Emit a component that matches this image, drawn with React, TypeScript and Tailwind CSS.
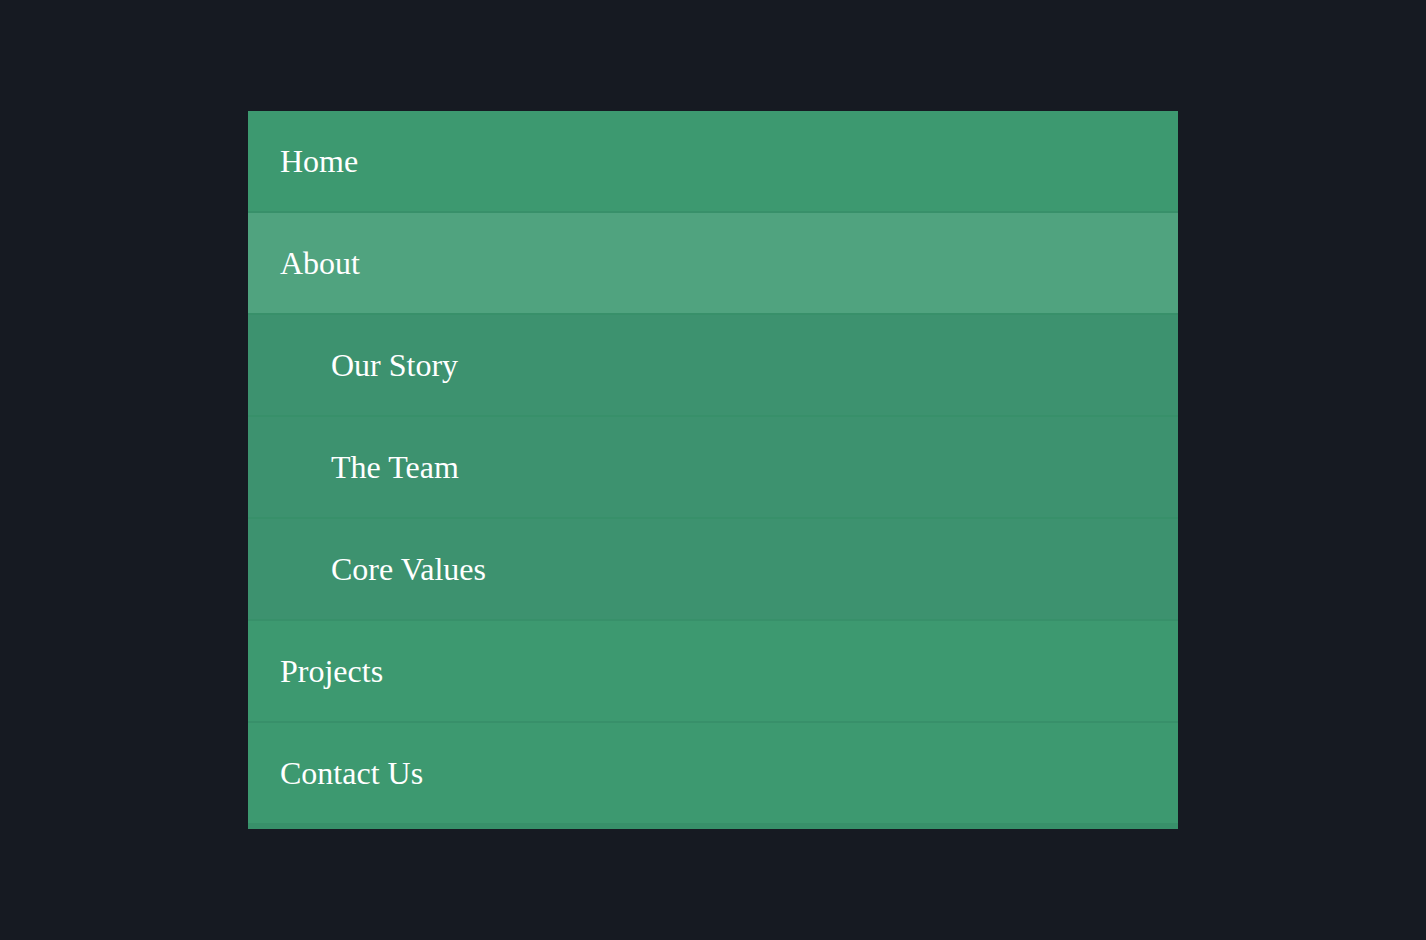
const items = [
  { label: 'Home' },
  { label: 'About', active: true },
  { label: 'Our Story', sub: true },
  { label: 'The Team', sub: true },
  { label: 'Core Values', sub: true },
  { label: 'Projects' },
  { label: 'Contact Us' },
];

export default function App() {
  return (
    <div className="min-h-screen bg-[#161a22] pt-[111px] font-['Liberation_Serif',serif]">
      <nav className="mx-auto w-[930px] bg-[#38906a] pb-[4px]">
        <ul>
          {items.map((item) => (
            <li
              key={item.label}
              className={`flex h-[102px] items-center border-b-2 border-[#38906a] text-[32px] text-white ${
                item.active ? 'bg-[#50a37f]' : item.sub ? 'bg-[#3d926f]' : 'bg-[#3d9970]'
              } ${item.sub ? 'pl-[83px]' : 'pl-[32px]'}`}
            >
              {item.label}
            </li>
          ))}
        </ul>
      </nav>
    </div>
  );
}
